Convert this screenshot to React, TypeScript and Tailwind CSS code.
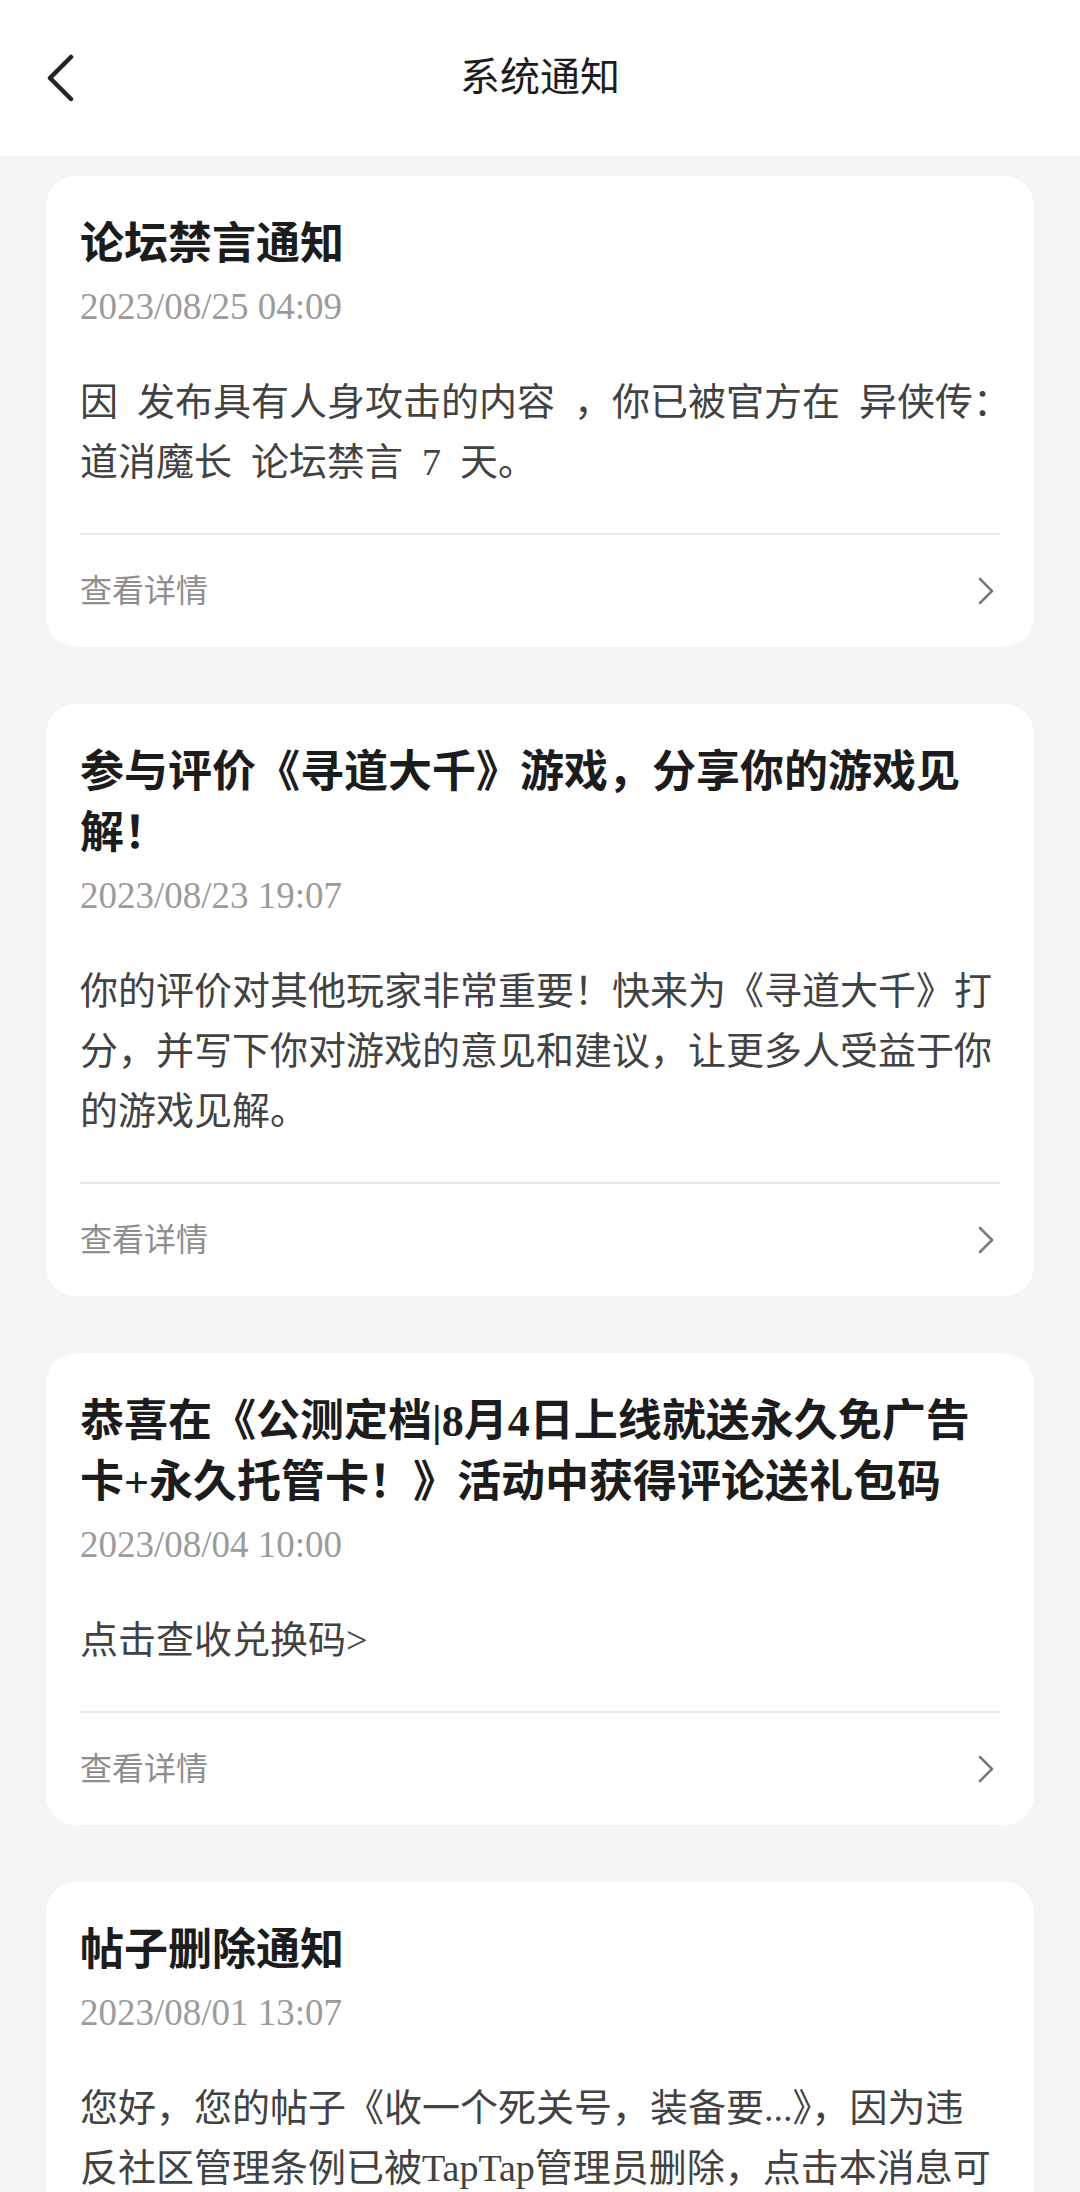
import React from 'react';

interface Notice {
    title: string[];
    date: string;
    body: string[];
}

const notices: Notice[] = [
    {
        title: ['论坛禁言通知'],
        date: '2023/08/25 04:09',
        body: ['因\u2002发布具有人身攻击的内容\u2002，你已被官方在\u2002异侠传：', '道消魔长\u2002论坛禁言\u20027\u2002天。']
    },
    {
        title: ['参与评价《寻道大千》游戏，分享你的游戏见', '解！'],
        date: '2023/08/23 19:07',
        body: [
            '你的评价对其他玩家非常重要！快来为《寻道大千》打',
            '分，并写下你对游戏的意见和建议，让更多人受益于你',
            '的游戏见解。'
        ]
    },
    {
        title: ['恭喜在《公测定档|8月4日上线就送永久免广告', '卡+永久托管卡！》活动中获得评论送礼包码'],
        date: '2023/08/04 10:00',
        body: ['点击查收兑换码>']
    },
    {
        title: ['帖子删除通知'],
        date: '2023/08/01 13:07',
        body: [
            '您好，您的帖子《收一个死关号，装备要...》，因为违',
            '反社区管理条例已被TapTap管理员删除，点击本消息可'
        ]
    }
];

const NoticeCard: React.FC<{ notice: Notice }> = ({ notice }) => (
    <div className="bg-white rounded-[30px] px-[34px] pt-[38px]">
        {/* Title */}
        <div className="text-[44px] leading-[61px] font-bold text-[#1c1c1c]">
            {notice.title.map((line, i) => (
                <div key={i} className="whitespace-nowrap">{line}</div>
            ))}
        </div>

        {/* Date */}
        <div className="mt-1 text-[37px] leading-[56px] text-[#9b9b9b]">{notice.date}</div>

        {/* Body */}
        <div className="mt-[37px] text-[38px] leading-[60px] text-[#424242]">
            {notice.body.map((line, i) => (
                <div key={i} className="whitespace-nowrap">{line}</div>
            ))}
        </div>

        <div className="mt-[41px] h-[2px] bg-[#e8e8e8]" />

        {/* Footer */}
        <div className="h-[112px] flex items-center justify-between">
            <span className="text-[32px] text-[#8e8e8e]">查看详情</span>
            <svg width="20" height="30" viewBox="0 0 20 30" fill="none" className="mr-[4px]">
                <path d="M4 3 L16 15 L4 27" stroke="#7a7a7a" strokeWidth="2.6" strokeLinecap="round" strokeLinejoin="round" />
            </svg>
        </div>
    </div>
);

export default function App() {
    return (
        <div className="h-[2192px] overflow-hidden bg-[#f4f5f7] font-['Liberation_Serif','Noto_Sans_CJK_SC',serif]">
            {/* Header */}
            <div className="h-[156px] bg-white flex items-center px-[46px]">
                <button className="w-[34px] h-[50px] flex items-center">
                    <svg width="30" height="48" viewBox="0 0 30 48" fill="none">
                        <path d="M25 3 L4 24 L25 45" stroke="#222222" strokeWidth="4.5" strokeLinecap="round" strokeLinejoin="round" />
                    </svg>
                </button>
                <div className="flex-1 text-center text-[40px] text-[#1c1c1c]">系统通知</div>
                <div className="w-[34px]" />
            </div>

            {/* Notice list */}
            <div className="px-[46px] pt-5 pb-10 flex flex-col gap-[57px]">
                {notices.map((n, i) => (
                    <NoticeCard key={i} notice={n} />
                ))}
            </div>
        </div>
    );
}
